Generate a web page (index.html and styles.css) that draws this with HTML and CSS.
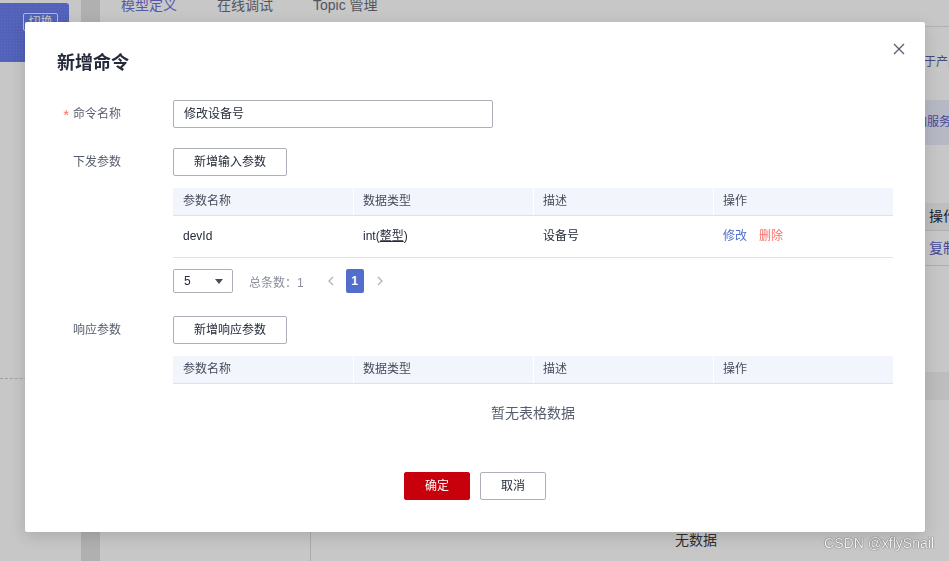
FILE: index.html
```html
<!DOCTYPE html>
<html lang="zh-CN">
<head>
<meta charset="utf-8">
<title>新增命令</title>
<link rel="stylesheet" href="styles.css">
</head>
<body>
<div class="app">
  <aside class="sidebar">
    <div class="brand"><span class="switch">切换</span></div>
    <div class="side-sep"></div>
  </aside>
  <div class="rail"></div>
  <main class="main">
    <nav class="tabs">
      <span class="tab active">模型定义</span>
      <span class="tab">在线调试</span>
      <span class="tab">Topic 管理</span>
    </nav>
    <div class="content">
      <div class="left-panel"></div>
      <div class="right-panel">
        <p class="desc">用于产品模型定义</p>
        <div class="svc-bar">添加服务</div>
        <div class="grid-head"><span class="cell-main">名称</span><span>操作</span></div>
        <div class="grid-row"><span class="cell-main">命令</span><span class="link">复制</span></div>
        <div class="band"></div>
        <div class="nodata">无数据</div>
      </div>
    </div>
  </main>
</div>

<div class="mask"></div>
<div class="watermark">CSDN @xflySnail</div>

<div class="dialog">
  <svg class="close" viewBox="0 0 12 12" width="12" height="12"><path d="M1 1L11 11M11 1L1 11" stroke="#575d6c" stroke-width="1.3" fill="none"/></svg>
  <h2 class="dialog-title">新增命令</h2>
  <div class="form">
    <div class="row">
      <div class="label"><span class="req">*</span>命令名称</div>
      <div class="ctrl"><div class="input">修改设备号</div></div>
    </div>
    <div class="row row-gap">
      <div class="label">下发参数</div>
      <div class="ctrl">
        <div class="btn">新增输入参数</div>
        <div class="table">
          <div class="thead">
            <div class="th">参数名称</div>
            <div class="th">数据类型</div>
            <div class="th">描述</div>
            <div class="th">操作</div>
          </div>
          <div class="tr">
            <div class="td">devId</div>
            <div class="td">int(<span class="tip">整型</span>)</div>
            <div class="td">设备号</div>
            <div class="td"><span class="op-edit">修改</span><span class="op-del">删除</span></div>
          </div>
        </div>
        <div class="pager">
          <div class="select"><span>5</span><svg width="8" height="5" viewBox="0 0 8 5"><path d="M0 0H8L4 5Z" fill="#464c5b"/></svg></div>
          <span class="total">总条数：1</span>
          <svg class="prev" width="6" height="10" viewBox="0 0 6 10"><path d="M5 1L1 5L5 9" fill="none" stroke="#adb0b8" stroke-width="1.2"/></svg>
          <span class="page">1</span>
          <svg class="next" width="6" height="10" viewBox="0 0 6 10"><path d="M1 1L5 5L1 9" fill="none" stroke="#adb0b8" stroke-width="1.2"/></svg>
        </div>
      </div>
    </div>
    <div class="row row-resp">
      <div class="label">响应参数</div>
      <div class="ctrl">
        <div class="btn">新增响应参数</div>
        <div class="table">
          <div class="thead">
            <div class="th">参数名称</div>
            <div class="th">数据类型</div>
            <div class="th">描述</div>
            <div class="th">操作</div>
          </div>
          <div class="empty">暂无表格数据</div>
        </div>
      </div>
    </div>
  </div>
  <div class="footer">
    <div class="btn btn-primary">确定</div>
    <div class="btn btn-cancel">取消</div>
  </div>
</div>
</body>
</html>
```
FILE: styles.css
```css
* { box-sizing: border-box; margin: 0; padding: 0; }
html, body { width: 949px; height: 561px; overflow: hidden; }
body {
  font-family: "Liberation Sans", "Noto Sans CJK SC", sans-serif;
  font-size: 12px;
  color: #252b3a;
  background: #fff;
  position: relative;
}

/* background page */
.app { display: flex; height: 561px; }
.sidebar { width: 81px; flex: none; background: #fff; display: flex; flex-direction: column; }
.brand {
  margin-top: 3px; width: 69px; height: 59px;
  background: #6a7ded;
  background-image: radial-gradient(rgba(255,255,255,.12) 1px, transparent 1px);
  background-size: 3px 3px;
  border-radius: 0 3px 3px 0;
  padding: 10px 0 0 23px;
}
.switch {
  display: inline-block; width: 35px; height: 18px;
  border: 1px solid rgba(255,255,255,.85); border-radius: 2px;
  color: #fff; font-size: 12px; line-height: 16px; text-align: center;
}
.side-sep { margin-top: 316px; border-top: 1px dashed #cfcfcf; }
.rail { width: 19px; flex: none; background: #e2e2e2; }
.main { flex: 1; display: flex; flex-direction: column; min-width: 0; }
.tabs {
  height: 27px; border-bottom: 1px solid #e3e3e3;
  display: flex; gap: 40px; padding-left: 21px;
  font-size: 14px; line-height: 14px; color: #6b6f7a; white-space: nowrap;
}
.tab { margin-top: -2px; }
.tab.active { color: #6f72d8; }
.content { flex: 1; display: flex; }
.left-panel { width: 211px; flex: none; border-right: 1px solid #dcdcdc; background: #fff; }
.right-panel { flex: 1; min-width: 0; overflow: hidden; display: flex; flex-direction: column; white-space: nowrap; }
.desc { margin-top: 26px; padding-left: 601px; font-size: 12px; line-height: 18px; color: #5a5fa0; }
.svc-bar { margin-top: 29px; height: 45px; background: #e9edfa; padding-left: 592px; line-height: 45px; font-size: 12px; color: #5a62c8; }
.grid-head { margin-top: 58px; height: 28px; display: flex; background: #f4f4f4; border-bottom: 1px solid #e0e0e0; font-size: 14px; line-height: 27px; color: #252b3a; }
.cell-main { width: 618px; flex: none; }
.grid-row { height: 35px; display: flex; border-bottom: 1px solid #e0e0e0; line-height: 34px; font-size: 14px; }
.link { color: #5a62c8; }
.band { margin-top: 106px; height: 28px; background: #f2f2f2; }
.nodata { margin-top: 130px; padding-left: 364px; font-size: 14px; line-height: 20px; color: #3a3d44; }

.mask { position: fixed; inset: 0; background: rgba(0,0,0,.22); }
.watermark {
  position: absolute; right: 15px; top: 534px;
  font-family: "Liberation Sans", sans-serif; font-size: 14px; line-height: 18px;
  color: rgba(255,255,255,.95);
  text-shadow: 0 0 1px #555, 0 0 1px #555;
}

/* dialog */
.dialog {
  position: fixed; left: 25px; top: 22px; width: 900px; height: 510px;
  background: #fff; border-radius: 2px;
  padding: 29px 32px 32px;
  box-shadow: 0 4px 16px rgba(0,0,0,.15);
}
.close { position: absolute; right: 20px; top: 21px; }
.dialog-title { font-size: 18px; line-height: 24px; font-weight: 700; color: #252b3a; }
.form { margin-top: 25px; }
.row { display: flex; align-items: flex-start; }
.row-gap { margin-top: 20px; }
.row-resp { margin-top: 23px; }
.label {
  width: 64px; height: 28px; flex: none; margin-right: 52px; overflow: visible;
  text-align: right; line-height: 28px; color: #575d6c; white-space: nowrap;
}
.req { color: #f66f6a; margin-right: 4px; font-size: 15px; line-height: 12px; vertical-align: top; position: relative; top: 9px; }
.ctrl { flex: 1; min-width: 0; }
.input {
  width: 320px; height: 28px; border: 1px solid #adb0b8; border-radius: 2px;
  padding: 0 10px; line-height: 26px; color: #252b3a;
}
.btn {
  display: block; width: max-content; height: 28px; padding: 0 20px;
  border: 1px solid #adb0b8; border-radius: 2px; background: #fff;
  line-height: 26px; color: #252b3a; font-size: 12px; white-space: nowrap;
}
.table { margin-top: 12px; width: 720px; }
.thead { display: flex; height: 28px; background: #f2f5fc; border-bottom: 1px solid #dfe1e6; }
.th { width: 180px; padding-left: 10px; line-height: 27px; color: #464c5b; }
.th + .th { border-left: 1px solid #fff; padding-left: 9px; }
.tr { display: flex; height: 42px; border-bottom: 1px solid #dfe1e6; }
.td { width: 180px; padding-left: 10px; line-height: 41px; color: #252b3a; }
.tip { text-decoration: underline; }
.op-edit { color: #526ecc; }
.op-del { color: #f66f6a; margin-left: 12px; }
.pager { margin-top: 11px; display: flex; align-items: center; height: 24px; }
.select {
  width: 60px; height: 24px; border: 1px solid #adb0b8; border-radius: 2px;
  display: flex; align-items: center; justify-content: space-between;
  padding: 0 9px 0 10px; color: #252b3a;
}
.total { margin-left: 16px; color: #8a8e99; }
.prev { margin-left: 24px; }
.page {
  margin-left: 12px; width: 18px; height: 24px; background: #526ecc; border-radius: 2px;
  color: #fff; font-weight: 700; text-align: center; line-height: 24px;
}
.next { margin-left: 13px; }
.empty { height: 58px; padding-bottom: 2px; display: flex; align-items: center; justify-content: center; font-size: 14px; color: #575d6c; }
.footer { margin-top: 30px; display: flex; justify-content: center; gap: 10px; }
.btn-primary { width: 66px; padding: 0; text-align: center; background: #c7000b; border-color: #c7000b; color: #fff; }
.btn-cancel { width: 66px; padding: 0; text-align: center; }
```
